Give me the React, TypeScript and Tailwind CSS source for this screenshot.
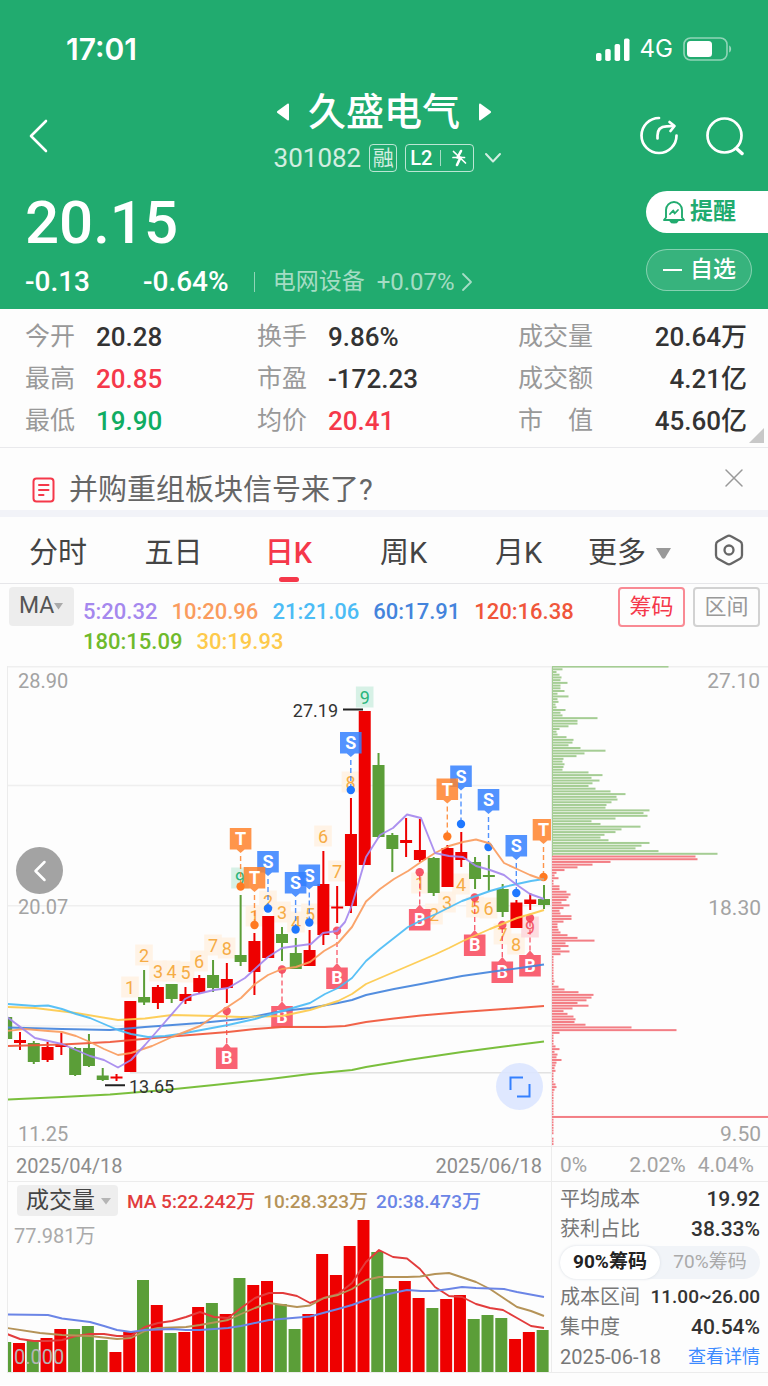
import React from "react";

type Candle = { up: boolean; body: [number, number]; wick: [number, number]; volTop: number };

const c = (up: boolean, b0: number, b1: number, w0: number, w1: number, volTop: number): Candle => ({
  up,
  body: [b0, b1],
  wick: [w0, w1],
  volTop,
});

const UP = "#ee0000";
const DOWN = "#5b9e38";

const candles: Candle[] = [
  c(false, 1017, 1039, 1017, 1039, 1342),
  c(true, 1040, 1043, 1032, 1050, 1343),
  c(false, 1043, 1062, 1041, 1064, 1341),
  c(true, 1047, 1060, 1042, 1062, 1338),
  c(true, 1044, 1047, 1033, 1055, 1329),
  c(false, 1048, 1075, 1047, 1076, 1329),
  c(false, 1048, 1066, 1034, 1067, 1326),
  c(false, 1075.5, 1080, 1068, 1081, 1340),
  c(true, 1076.5, 1078.5, 1074, 1081, 1352),
  c(true, 1001, 1072, 1001, 1072, 1332),
  c(false, 997, 1002.5, 970, 1005, 1280),
  c(true, 987, 1003, 985, 1009, 1305),
  c(false, 984, 999, 984, 1003, 1333),
  c(true, 994, 1001, 987, 1004, 1332),
  c(true, 978, 992, 975, 994, 1307),
  c(false, 975, 988, 960, 992, 1303),
  c(true, 979, 988, 963, 1003, 1314),
  c(false, 955, 962, 895, 966, 1278),
  c(true, 941, 972, 933, 995, 1285),
  c(true, 916, 958, 916, 958, 1281),
  c(false, 934, 943, 927, 961, 1304),
  c(false, 953, 969, 938, 969, 1329),
  c(true, 950, 966, 930, 966, 1314),
  c(true, 884, 935, 851, 945, 1254),
  c(true, 906.5, 908.5, 886, 923, 1275),
  c(true, 834, 906, 798, 913, 1246),
  c(true, 711, 865, 711, 865, 1220),
  c(false, 765, 837, 753, 838, 1252),
  c(false, 835, 849, 833, 872, 1289),
  c(true, 840, 843, 818, 857, 1281),
  c(true, 850, 860, 819, 862, 1298),
  c(false, 858, 893, 857, 896, 1308),
  c(true, 848, 887, 845, 887, 1299),
  c(true, 852, 860, 832, 867, 1295),
  c(false, 862, 879, 857, 889, 1319),
  c(false, 875, 877, 855, 891, 1315),
  c(false, 889, 912, 884, 917, 1318),
  c(true, 902.5, 928, 900, 928, 1339),
  c(true, 899.5, 904, 893, 910, 1332),
  c(false, 899, 905, 885, 909, 1330),
];

const candleX = (i: number) => 6.2 + 13.79 * i;
const volumeX = (i: number) => 5.2 + 13.78 * i;

const averages = [
  { color: "#6fba2c", points: "7,1099.5 62,1097 110,1094.5 165,1090 214,1085 270,1079 310,1074 352,1070 366,1067 408,1060 462,1052 504,1046.5 544,1041.5" },
  { color: "#f0563a", points: "7,1046 62,1044.5 110,1042 165,1037 228,1032 255,1029 282,1027 325,1027 345,1026 366,1022 394,1018.5 421,1015.5 462,1012 504,1009 544,1006" },
  { color: "#4484dc", points: "7,1027.5 62,1029 110,1030 145,1027 200,1023 241,1019 282,1011 310,1008 338,1003 352,1000 366,995 394,989 421,984 462,976 490,972 520,968 544,964.5" },
  { color: "#fdca4c", points: "7,1007 35,1008 76,1013 118,1020 145,1018.5 172,1015 214,1016 241,1017 282,1016 310,1010 338,1001 352,994 366,984 380,978 408,966 435,954.5 449,948 463,941 490,929 517,918 531,914 544,910" },
  { color: "#4cbcf5", points: "7,1004 35,1006 48,1005.5 62,1009 76,1014 90,1018 104,1024 118,1030 131,1034 148,1037 165,1036 180,1034 228,1025 255,1019 282,1011 310,1003 325,994 338,988 352,978 366,961 380,949 394,938 408,927 422,920 436,914 462,901 476,896 490,891 504,887 517,884 531,881 544,879" },
  { color: "#fa9c5e", points: "7,1031 25,1029 48,1031 62,1032 76,1036 90,1042 104,1049 118,1055 131,1053 152,1046 172,1037 200,1026 220,1012 241,998 255,984 268,975 282,969 296,967 310,962 324,951 338,943 352,927 366,901.5 380,889 394,879 408,871 421,862 435,853 449,846 463,842 476,839.5 490,843.5 504,863 517,869 530,875 544,880" },
  { color: "#a588ee", points: "7,1017 35,1038 62,1044 90,1056 104,1060 118,1067.5 131,1060 145,1045 165,1022 185,999 193,995 214,990 228,988 245,978 268,957 282,948 296,946 311,944 323,933 337,931 345,922 352,905 366,857 380,835 393,828 407,814.5 421,818 435,853 449,856 463,857 476,866 490,870 504,875 517,885 530,894 544,899" },
];

const volumeAverages = [
  { color: "#e23c3c", points: "7,1334 20,1339 34,1341 48,1341 62,1340 76,1336 90,1334 104,1334 117,1336 131,1336 145,1327 158,1323 172,1321 186,1317 200,1312 214,1317 228,1318 241,1308 255,1298 269,1293 283,1293 297,1296 310,1303 324,1298 338,1294 352,1283 366,1262 379,1250 393,1257 407,1258.5 420,1269 435,1287 449,1296 462,1297 476,1304 490,1308 503,1310 517,1318 531,1326 544,1328" },
  { color: "#b59358", points: "7,1328 40,1333 62,1335 90,1336 117,1339 131,1338 145,1331 158,1328 172,1327.5 186,1327 200,1325 228,1320 241,1314 255,1308 269,1303 297,1307 310,1305.5 324,1298 338,1295 352,1289 366,1280 379,1277 407,1277 420,1276.5 435,1274 449,1273 476,1282 490,1289 517,1307 531,1311 544,1316" },
  { color: "#6b85e6", points: "7,1314.5 48,1315 62,1318.5 90,1322 104,1326 117,1330 131,1332 145,1330 172,1329 186,1330 200,1330 228,1328 241,1326 269,1320 310,1316.5 338,1309 352,1305 366,1300 380,1296 393,1293 407,1290 421,1291 434,1291 449,1289 462,1287 476,1288 504,1289 517,1292 544,1297" },
];

type Tone = "seq" | "green" | "pink";
const counts: [string, number, number, Tone][] = [
  ["1", 130, 987, "seq"], ["2", 144, 955, "seq"], ["3", 158, 971, "seq"], ["4", 171.5, 971, "seq"],
  ["5", 185.5, 972, "seq"], ["6", 199, 961, "seq"], ["7", 213, 945, "seq"], ["8", 226.7, 948, "seq"],
  ["9", 240, 878, "green"], ["1", 254.5, 916, "seq"], ["2", 268, 901, "seq"], ["3", 282, 912, "seq"],
  ["4", 296, 922, "seq"], ["5", 310, 914, "seq"], ["6", 323, 836, "seq"], ["7", 337, 871, "seq"],
  ["8", 350.5, 782, "seq"], ["9", 364.7, 697, "green"], ["1", 420, 883, "seq"], ["2", 434, 914, "seq"],
  ["3", 447, 902, "seq"], ["4", 461, 884, "seq"], ["5", 475, 907, "seq"], ["6", 488.5, 908, "seq"],
  ["7", 502.5, 934, "seq"], ["8", 516, 944, "seq"], ["9", 530, 927, "pink"],
];
const tones: Record<Tone, { bg: string; fg: string }> = {
  seq: { bg: "#fff2e3", fg: "#f6ac45" },
  green: { bg: "#d3f0e3", fg: "#2bb57c" },
  pink: { bg: "#fdd8dd", fg: "#f25a6b" },
};

type Kind = "S" | "T" | "B";
const signals: [Kind, number, number, number][] = [
  ["S", 268, 862, 908.5], ["T", 240.6, 839, 886.5], ["T", 254.5, 878, 925], ["S", 309.3, 875.5, 922.5],
  ["S", 295.6, 883, 929.5], ["S", 350.8, 743, 790], ["S", 461, 776.5, 824], ["T", 447.3, 789.5, 836.5],
  ["S", 488.5, 800, 847], ["S", 516.3, 846, 893], ["T", 543.5, 830, 877],
  ["B", 226.7, 1058, 1011], ["B", 282, 1016.5, 969.5], ["B", 337, 978, 930.7], ["B", 419.7, 919.5, 872.3],
  ["B", 474.7, 945, 897.5], ["B", 502.3, 972, 925], ["B", 530, 965.5, 918],
];
const signalColor: Record<Kind, { box: string; dot: string }> = {
  S: { box: "#3480ff", dot: "#1f78ff" },
  T: { box: "#ff832b", dot: "#ff7a22" },
  B: { box: "#f8475a", dot: "#f5384e" },
};

function Signal({ kind, x, y, dot }: { kind: Kind; x: number; y: number; dot: number }) {
  const { box, dot: dotColor } = signalColor[kind];
  const below = kind === "B";
  const shape = below
    ? `M${x - 10.8} ${y - 10.5}H${x - 4}L${x} ${y - 15}L${x + 4} ${y - 10.5}H${x + 10.8}V${y + 11}H${x - 10.8}Z`
    : `M${x - 10.8} ${y - 11}H${x + 10.8}V${y + 10.5}H${x + 4}L${x} ${y + 14}L${x - 4} ${y + 10.5}H${x - 10.8}Z`;
  return (
    <g>
      <path d={shape} fill={box} opacity={0.85} />
      <line x1={x} x2={x} y1={below ? y - 15 : y + 17} y2={dot} stroke={box} strokeWidth={1.4} strokeDasharray="5 3" opacity={0.85} />
      <circle cx={x} cy={dot} r={4.2} fill={dotColor} opacity={below ? 0.85 : 1} />
      <text x={x} y={y + 6} textAnchor="middle" fontSize={18} fontWeight={700} fill="#fff">{kind}</text>
    </g>
  );
}

function CandleChart() {
  return (
    <svg viewBox="8 666 543 480" className="block h-auto w-full" role="img" aria-label="日K线图">
      <g stroke="#efefef" strokeWidth={1.4}>
        <path d="M8 666.7H551M8 785.5H551M8 905.7H551M8 1026H551" fill="none" />
        <path d="M130 1072.8H551" stroke="#e2e2e2" />
      </g>
      {counts.map(([n, x, y, tone], i) => (
        <g key={i}>
          <rect x={x - 8.8} y={y - 10.5} width={17.6} height={21} fill={tones[tone].bg} opacity={0.9} />
          <text x={x} y={y + 7} textAnchor="middle" fontSize={18} fill={tones[tone].fg}>{n}</text>
        </g>
      ))}
      <g fill="#a3a3a3" fontSize={20}>
        <text x={18} y={688}>28.90</text>
        <text x={18} y={914}>20.07</text>
        <text x={18} y={1141}>11.25</text>
      </g>
      {candles.map((k, i) => {
        const x = candleX(i);
        const color = k.up ? UP : DOWN;
        return (
          <g key={i} fill={color}>
            <rect x={x - 1} y={k.wick[0]} width={2} height={k.wick[1] - k.wick[0]} />
            <rect x={x - 6} y={k.body[0]} width={12} height={k.body[1] - k.body[0]} />
          </g>
        );
      })}
      {signals.map(([kind, x, y, dot], i) => (
        <Signal key={i} kind={kind} x={x} y={y} dot={dot} />
      ))}
      {averages.map((a) => (
        <polyline key={a.color} points={a.points} fill="none" stroke={a.color} strokeWidth={1.9} strokeLinejoin="round" opacity={0.92} />
      ))}
      <path d="M343 709.5H363M105 1085.3H125" stroke="#222" strokeWidth={2} />
      <g fill="#333" fontSize={18}>
        <text x={338} y={716.5} textAnchor="end">27.19</text>
        <text x={129} y={1093}>13.65</text>
      </g>
    </svg>
  );
}

const chips: number[] = [
  117, 11, 5, 8, 10, 9, 16, 9, 9, 13, 6, 17, 6, 7, 4, 5, 14, 9, 11, 46, 26, 26, 17, 8, 5, 6, 15, 22, 21, 17, 29, 54,
  33, 25, 12, 11, 13, 12, 11, 37, 51, 40, 48, 41, 37, 44, 59, 74, 65, 66, 60, 55, 54, 98, 92, 96, 64, 40, 49, 89, 70,
  64, 53, 49, 57, 98, 90, 84, 107, 166, 144, 146, 59, 41, 26, 13, 5, 3, 7, 2, 2, 8, 8, 15, 19, 17, 15, 10, 18, 12, 8,
  9, 20, 20, 12, 6, 6, 7, 9, 16, 26, 43, 14, 17, 9, 18, 9, 2, 2, 2, 2, 2, 2, 2, 2, 2, 3, 2, 7, 13, 27, 42, 40, 35, 26,
  37, 21, 12, 16, 22, 24, 23, 34, 80, 125, 8, 2, 2, 2, 2, 4, 8, 3, 6, 5, 10, 5, 4, 3, 4, 2, 2, 2, 2, 4, 5, 3, 2, 2, 2,
  2, 2, 2, 2, 2, 2, 217, 2, 2, 2, 2, 2, 2, 0, 2, 2, 2,
];

function ChipChart() {
  return (
    <svg viewBox="552 666 216 480" className="block h-auto w-full" role="img" aria-label="筹码分布">
      <path d="M552 666.7H768" stroke="#efefef" strokeWidth={1.4} />
      {chips.map((w, i) => (
        <rect key={i} x={551.5} y={665.6 + i * 2.713} width={w} height={2} fill={i < 70 ? "#a5cd94" : "#f37e85"} />
      ))}
      <rect x={551.5} y={666} width={1.5} height={190} fill="#a5cd94" />
      <g fill="#a3a3a3" fontSize={21} textAnchor="end">
        <text x={760} y={688}>27.10</text>
        <text x={761} y={914.5}>18.30</text>
        <text x={761} y={1141}>9.50</text>
      </g>
    </svg>
  );
}

function VolumeChart() {
  return (
    <svg viewBox="8 1216 543 156" className="block h-auto w-full" role="img" aria-label="成交量图">
      {candles.map((k, i) => (
        <rect key={i} x={volumeX(i) - 6} y={k.volTop} width={12} height={1372 - k.volTop} fill={k.up ? UP : DOWN} />
      ))}
      {volumeAverages.map((a) => (
        <polyline key={a.color} points={a.points} fill="none" stroke={a.color} strokeWidth={1.9} strokeLinejoin="round" />
      ))}
      <g fill="#aaaaaa" fontSize={20}>
        <text x={14} y={1243}>77.981万</text>
        <text x={14} y={1364} fill="#b5b5b5">0.000</text>
      </g>
    </svg>
  );
}

function StatusBar() {
  return (
    <div className="flex items-center justify-between pt-7 pr-9 pl-[66px] font-['Inter',sans-serif]">
      <span className="text-[30px] leading-[42px] font-semibold">17:01</span>
      <div className="flex items-center gap-2.5">
        <svg width="34" height="23" viewBox="0 0 34 23" fill="#fff" aria-hidden="true">
          <rect x="0" y="15" width="5.5" height="8" rx="1.8" />
          <rect x="9.2" y="11" width="5.5" height="12" rx="1.8" />
          <rect x="18.6" y="6" width="5.5" height="17" rx="1.8" />
          <rect x="28" y="0.5" width="5.5" height="22.5" rx="1.8" />
        </svg>
        <span className="text-[24px] leading-[42px]">4G</span>
        <svg width="49" height="24" viewBox="0 0 49 24" aria-hidden="true">
          <rect x="1" y="1" width="43" height="22" rx="6.5" fill="none" stroke="#fff" strokeOpacity=".5" strokeWidth="1.6" />
          <rect x="4" y="4" width="25" height="16" rx="3.5" fill="#fff" />
          <path d="M46.2 8.5c2.6 1.2 2.6 5.8 0 7z" fill="#fff" fillOpacity=".55" />
        </svg>
      </div>
    </div>
  );
}

function TitleBar() {
  return (
    <div className="grid grid-cols-[1fr_auto_1fr] items-center pt-4 pr-6 pl-6">
      <button aria-label="返回" className="mt-2 ml-1 justify-self-start">
        <svg width="22" height="34" viewBox="0 0 22 34" fill="none" stroke="#fff" strokeWidth="2.6" strokeLinecap="round" strokeLinejoin="round">
          <path d="M18 2 3 17l15 15" />
        </svg>
      </button>
      <div className="flex flex-col items-center">
        <div className="flex items-center gap-[18px]">
          <button aria-label="上一只">
            <svg width="14" height="18" viewBox="0 0 14 18" fill="#fff"><path d="M13 1.500v15c0 .8-.8 1.200-1.500.7L1.500 10c-.8-.6-.8-1.400 0-2l10-7.200c.7-.5 1.500-.1 1.500.7z" /></svg>
          </button>
          <h1 className="text-[38px] leading-[52px] font-medium">久盛电气</h1>
          <button aria-label="下一只">
            <svg width="14" height="18" viewBox="0 0 14 18" fill="#fff"><path d="M1 1.500v15c0 .8.8 1.200 1.500.7L12.500 10c.8-.6.8-1.400 0-2L2.500.8C1.800.3 1 .7 1 1.500z" /></svg>
          </button>
        </div>
        <div className="flex items-center gap-2 pl-2 text-white/80">
          <span className="text-[26px] leading-10">301082</span>
          <span className="flex h-7 w-7 items-center justify-center rounded border-[1.5px] border-white/70 text-[21px] leading-6">融</span>
          <span className="flex h-7 items-center gap-2 rounded border-[1.5px] border-white/70 px-1 text-[20px] leading-6 font-medium text-white">
            L2
            <span className="h-4 w-px bg-white/60" />
            <svg width="20" height="20" viewBox="0 0 20 20" fill="none" stroke="#fff" strokeLinecap="round" strokeLinejoin="round">
              <path d="M12 3 8.500 9.500h3L8 17" strokeWidth="2.600" />
              <path d="M4.500 3.500l12 11.500M4 9.500h5M12 9.500h3.500" strokeWidth="1.700" />
            </svg>
          </span>
          <button aria-label="展开">
            <svg width="20" height="12" viewBox="0 0 20 12" fill="none" stroke="#fff" strokeOpacity=".8" strokeWidth="2" strokeLinecap="round" strokeLinejoin="round">
              <path d="M4 2l7 7.500L18 2" />
            </svg>
          </button>
        </div>
      </div>
      <div className="mt-2 flex items-center gap-7 justify-self-end">
        <button aria-label="分享">
          <svg width="38" height="40" viewBox="0 0 38 40" fill="none" stroke="#fff" strokeWidth="2.700" strokeLinecap="round" strokeLinejoin="round">
            <path d="M19 2A17.500 17.500 0 1 0 36.500 19.500" />
            <path d="M17.500 22.500v-3c0-6.500 4-9 9-9.200l7-.3" />
            <path d="M29.500 6 34.500 10l-4 5" />
          </svg>
        </button>
        <button aria-label="搜索">
          <svg width="38" height="40" viewBox="0 0 38 40" fill="none" stroke="#fff" strokeWidth="2.700" strokeLinecap="round">
            <circle cx="18.500" cy="19.500" r="17" />
            <path d="M31 33l5 4.500" strokeWidth="3.500" />
          </svg>
        </button>
      </div>
    </div>
  );
}

function Quote() {
  return (
    <div className="flex justify-between pt-3 pb-[9px]">
      <div className="pl-[25px]">
        <div className="text-[60px] leading-[66px] font-medium">20.15</div>
        <div className="flex items-center pt-2">
          <span className="w-[118px] text-[28px] leading-9 font-medium">-0.13</span>
          <span className="text-[28px] leading-9 font-medium">-0.64%</span>
          <span className="ml-[25px] h-5 w-px bg-white/50" />
          <a href="#sector" className="ml-[18px] flex items-center gap-3 text-[24px] leading-9 text-white/60">
            <span className="text-[23px]">电网设备</span>
            <span className="flex items-center gap-1.5">
              +0.07%
              <svg width="12" height="20" viewBox="0 0 12 20" fill="none" stroke="currentColor" strokeWidth="1.800" strokeLinecap="round" strokeLinejoin="round">
                <path d="M2 2l8 8-8 8" />
              </svg>
            </span>
          </a>
        </div>
      </div>
      <div className="flex flex-col items-start gap-4 pt-px">
        <button className="flex h-[42px] w-[122px] items-center gap-1 rounded-l-full bg-white pl-4 text-[23px] leading-8 font-bold text-[#21ab6f]">
          <svg width="24" height="24" viewBox="0 0 24 24" fill="none" stroke="currentColor" strokeWidth="1.900" strokeLinecap="round" strokeLinejoin="round" aria-hidden="true">
            <path d="M4 17.500V10a8 8 0 0 1 16 0v7.500l2 2.500H2z" />
            <path d="M8.500 21c1 2.200 6 2.200 7 0z" fill="currentColor" />
            <path d="M8 14l3.200-3.500 1.500 3L16 10" strokeWidth="1.800" />
          </svg>
          提醒
        </button>
        <button className="flex h-[42px] w-[106px] items-center gap-2 rounded-full border border-white/40 bg-white/10 pl-4 text-[23px] leading-8 font-medium">
          <span className="h-0.5 w-[19px] bg-white" />
          自选
        </button>
      </div>
    </div>
  );
}

const statColumns = [
  {
    labelWidth: "w-[71px]",
    align: "",
    rows: [["今开", "20.28", "text-[#333]"], ["最高", "20.85", "text-[#f5384a]"], ["最低", "19.90", "text-[#0fac62]"]],
  },
  {
    labelWidth: "w-[71px]",
    align: "",
    rows: [["换手", "9.86%", "text-[#333]"], ["市盈", "-172.23", "text-[#333]"], ["均价", "20.41", "text-[#f5384a]"]],
  },
  {
    labelWidth: "w-[77px]",
    align: "justify-between",
    rows: [["成交量", "20.64万", "text-[#333]"], ["成交额", "4.21亿", "text-[#333]"], ["市　值", "45.60亿", "text-[#333]"]],
  },
];

function Stats() {
  return (
    <section className="relative grid grid-cols-[232fr_261fr_229fr] border-b border-[#e9e9ec] pt-[7px] pr-[21px] pb-[5px] pl-[25px]">
      {statColumns.map((col, i) => (
        <dl key={i}>
          {col.rows.map(([label, value, color]) => (
            <div key={label} className={`flex items-center ${col.align}`}>
              <dt className={`${col.labelWidth} text-[25px] leading-[42px] text-[#999]`}>{label}</dt>
              <dd className={`text-[26px] leading-[42px] font-medium ${color}`}>{value}</dd>
            </div>
          ))}
        </dl>
      ))}
      <svg className="absolute right-1 bottom-1" width="15" height="15" viewBox="0 0 15 15" aria-hidden="true">
        <path d="M15 0v15H0z" fill="#c8c8c8" />
      </svg>
    </section>
  );
}

function Notice() {
  return (
    <section className="flex items-center border-b-[7px] border-[#f2f3f8] pt-6 pr-6 pb-0.5 pl-8">
      <svg width="24" height="26" viewBox="0 0 24 26" fill="none" stroke="#f5384a" strokeWidth="2" strokeLinecap="round" aria-hidden="true">
        <rect x="1.500" y="1.500" width="20" height="23" rx="3" />
        <path d="M7 8h9.500M7 13h9.500M7 18h4.500" />
      </svg>
      <a href="#notice" className="ml-[13px] grow text-[29px] leading-9 text-[#666]">并购重组板块信号来了?</a>
      <button aria-label="关闭" className="-mt-6">
        <svg width="20" height="20" viewBox="0 0 20 20" stroke="#999" strokeWidth="1.500" strokeLinecap="round">
          <path d="M2 2l16 16M18 2 2 18" />
        </svg>
      </button>
    </section>
  );
}

function Tabs() {
  return (
    <nav className="grid grid-cols-[116fr_115fr_115fr_115fr_115fr_107fr_85fr] border-b border-[#e6e6e9] text-[29px] leading-[44px] text-[#444]">
      {["分时", "五日", "日K", "周K", "月K"].map((t) => (
        <button key={t} className={`flex flex-col items-center pt-3.5 pb-px ${t === "日K" ? "font-medium text-[#f5384a]" : ""}`}>
          {t}
          <span className={`mt-0.5 h-[5px] w-5 rounded-full ${t === "日K" ? "bg-[#f5384a]" : ""}`} />
        </button>
      ))}
      <button aria-haspopup="menu" className="flex items-center gap-2.5 pt-3.5 pb-2 pl-3 whitespace-nowrap">
        更多
        <svg width="15" height="11" viewBox="0 0 15 11" aria-hidden="true"><path d="M0 0h15L9 10q-1.500 1.500-3 0z" fill="#999" /></svg>
      </button>
      <button aria-label="设置" className="mr-6 justify-self-end">
        <svg width="30" height="32" viewBox="0 0 30 32" fill="none" stroke="#666" strokeWidth="2.300" strokeLinejoin="round">
          <path d="M13 2.300q2-1.200 4 0l9 5q2 1.200 2 3.400v10.600q0 2.200-2 3.400l-9 5q-2 1.200-4 0l-9-5q-2-1.200-2-3.400V10.700q0-2.200 2-3.400z" />
          <circle cx="15" cy="16" r="4.500" />
        </svg>
      </button>
    </nav>
  );
}

const legend: [string, string][] = [
  ["5:20.32", "text-[#a588ee]"],
  ["10:20.96", "text-[#fa9c5e]"],
  ["21:21.06", "text-[#4cbcf5]"],
  ["60:17.91", "text-[#4484dc]"],
  ["120:16.38", "text-[#f0563a]"],
  ["180:15.09", "text-[#6fba2c]"],
  ["30:19.93", "text-[#fdca4c]"],
];

function Indicators() {
  return (
    <section className="flex items-start pt-[3px] pr-2 pb-[9px] pl-[9px]">
      <div className="relative">
        <select aria-label="主图指标" className="block h-[39px] w-[65px] appearance-none rounded bg-[#ededed] pl-2.5 text-[23px] text-[#555]">
          <option>MA</option>
        </select>
        <svg className="pointer-events-none absolute top-4 right-[11px]" width="9" height="7" viewBox="0 0 9 7" aria-hidden="true"><path d="M0 0h9L4.500 6.500z" fill="#aaa" /></svg>
      </div>
      <div className="ml-[9px] flex grow basis-0 flex-wrap gap-x-[14px] pt-2.5 text-[22px] leading-[30px] font-medium">
        {legend.map(([t, color]) => (
          <span key={t} className={color}>{t}</span>
        ))}
      </div>
      <div className="flex gap-2 text-[22px] leading-9">
        <button className="h-10 w-[67px] rounded border-2 border-[#f98a94] text-[#f5384a]">筹码</button>
        <button className="h-10 w-[67px] rounded border-2 border-[#d2d2d2] text-[#999]">区间</button>
      </div>
    </section>
  );
}

function ChipSummary() {
  const row = "flex items-center justify-between text-[20px] leading-[30px]";
  return (
    <div className="px-2 pt-0.5 text-[#777]">
      <div className={row}><span>平均成本</span><span className="text-[21px] font-medium text-[#333]">19.92</span></div>
      <div className={row}><span>获利占比</span><span className="text-[21px] font-medium text-[#333]">38.33%</span></div>
      <div className="mt-0.5 mb-[3px] flex h-[33px] rounded-full bg-[#f1f4f8] text-[19px]">
        <button className="grow basis-0 rounded-full bg-white font-bold whitespace-nowrap text-[#222] shadow-[0_0_3px_#d8dde4]">90%筹码</button>
        <button className="grow basis-0 whitespace-nowrap text-[#aaa]">70%筹码</button>
      </div>
      <div className={row}><span>成本区间</span><span className="text-[19px] font-medium text-[#333]">11.00~26.00</span></div>
      <div className={row}><span>集中度</span><span className="text-[21px] font-medium text-[#333]">40.54%</span></div>
      <div className={row}><span>2025-06-18</span><a href="#detail" className="text-[18px] text-[#3d8bff]">查看详情</a></div>
    </div>
  );
}

function Charts() {
  return (
    <section className="grid grid-cols-[551fr_217fr]">
      <div className="pl-[7px]">
        <div className="border-b border-l border-[#ececec]">
          <div className="relative">
            <CandleChart />
            <button aria-label="向左" className="absolute top-[181px] left-2 flex h-[47px] w-[47px] items-center justify-center rounded-full bg-[#a3a3a3]">
              <svg width="14" height="22" viewBox="0 0 14 22" fill="none" stroke="#fff" strokeWidth="2.500" strokeLinecap="round" strokeLinejoin="round"><path d="M11.500 2 2.500 11l9 9" /></svg>
            </button>
            <button aria-label="全屏" className="absolute right-2 bottom-9 flex h-[47px] w-[47px] items-center justify-center rounded-full bg-[#dbe6ff]/90">
              <svg width="22" height="22" viewBox="0 0 22 22" fill="none" stroke="#3480ff" strokeWidth="2"><path d="M1.500 14V1.500H14M20.500 8v12.500H8" /></svg>
            </button>
          </div>
          <div className="flex h-9 items-center justify-between border-y border-[#ececec] pt-[3px] pr-[9px] pl-2 text-[20px] text-[#8c8c8c]">
            <span>2025/04/18</span>
            <span>2025/06/18</span>
          </div>
          <div className="flex h-[34px] items-end pl-[9px]">
            <div className="relative">
              <select aria-label="副图指标" className="block h-[31px] w-[101px] appearance-none rounded bg-[#eeeeee] pl-[9px] text-[23px] leading-[31px] text-[#444]">
                <option>成交量</option>
              </select>
              <svg className="pointer-events-none absolute top-[13px] right-[7px]" width="10" height="7" viewBox="0 0 10 7" aria-hidden="true"><path d="M0 0h10L5 6.500z" fill="#b5b5b5" /></svg>
            </div>
            <div className="ml-[9px] flex gap-2 text-[19px] leading-7 font-medium whitespace-nowrap">
              <span className="text-[#e23c3c]">MA 5:22.242万</span>
              <span className="text-[#b59358]">10:28.323万</span>
              <span className="text-[#6b85e6]">20:38.473万</span>
            </div>
          </div>
          <VolumeChart />
        </div>
      </div>
      <div className="border-b border-l border-[#ececec]">
        <ChipChart />
        <div className="flex h-9 items-center border-y border-[#ececec] pt-[3px] pr-3.5 pl-2 text-[21px] text-[#a3a3a3]">
          <span className="grow">0%</span>
          <span>2.02%</span>
          <span className="ml-3">4.04%</span>
        </div>
        <ChipSummary />
      </div>
    </section>
  );
}

export default function App() {
  return (
    <main className="bg-[#fdfdfd] pb-3 font-['Roboto','Noto_Sans_CJK_SC',sans-serif]" lang="zh-CN">
      <header className="bg-[#21ab6f] text-white">
        <StatusBar />
        <TitleBar />
        <Quote />
      </header>
      <Stats />
      <Notice />
      <Tabs />
      <Indicators />
      <Charts />
    </main>
  );
}
